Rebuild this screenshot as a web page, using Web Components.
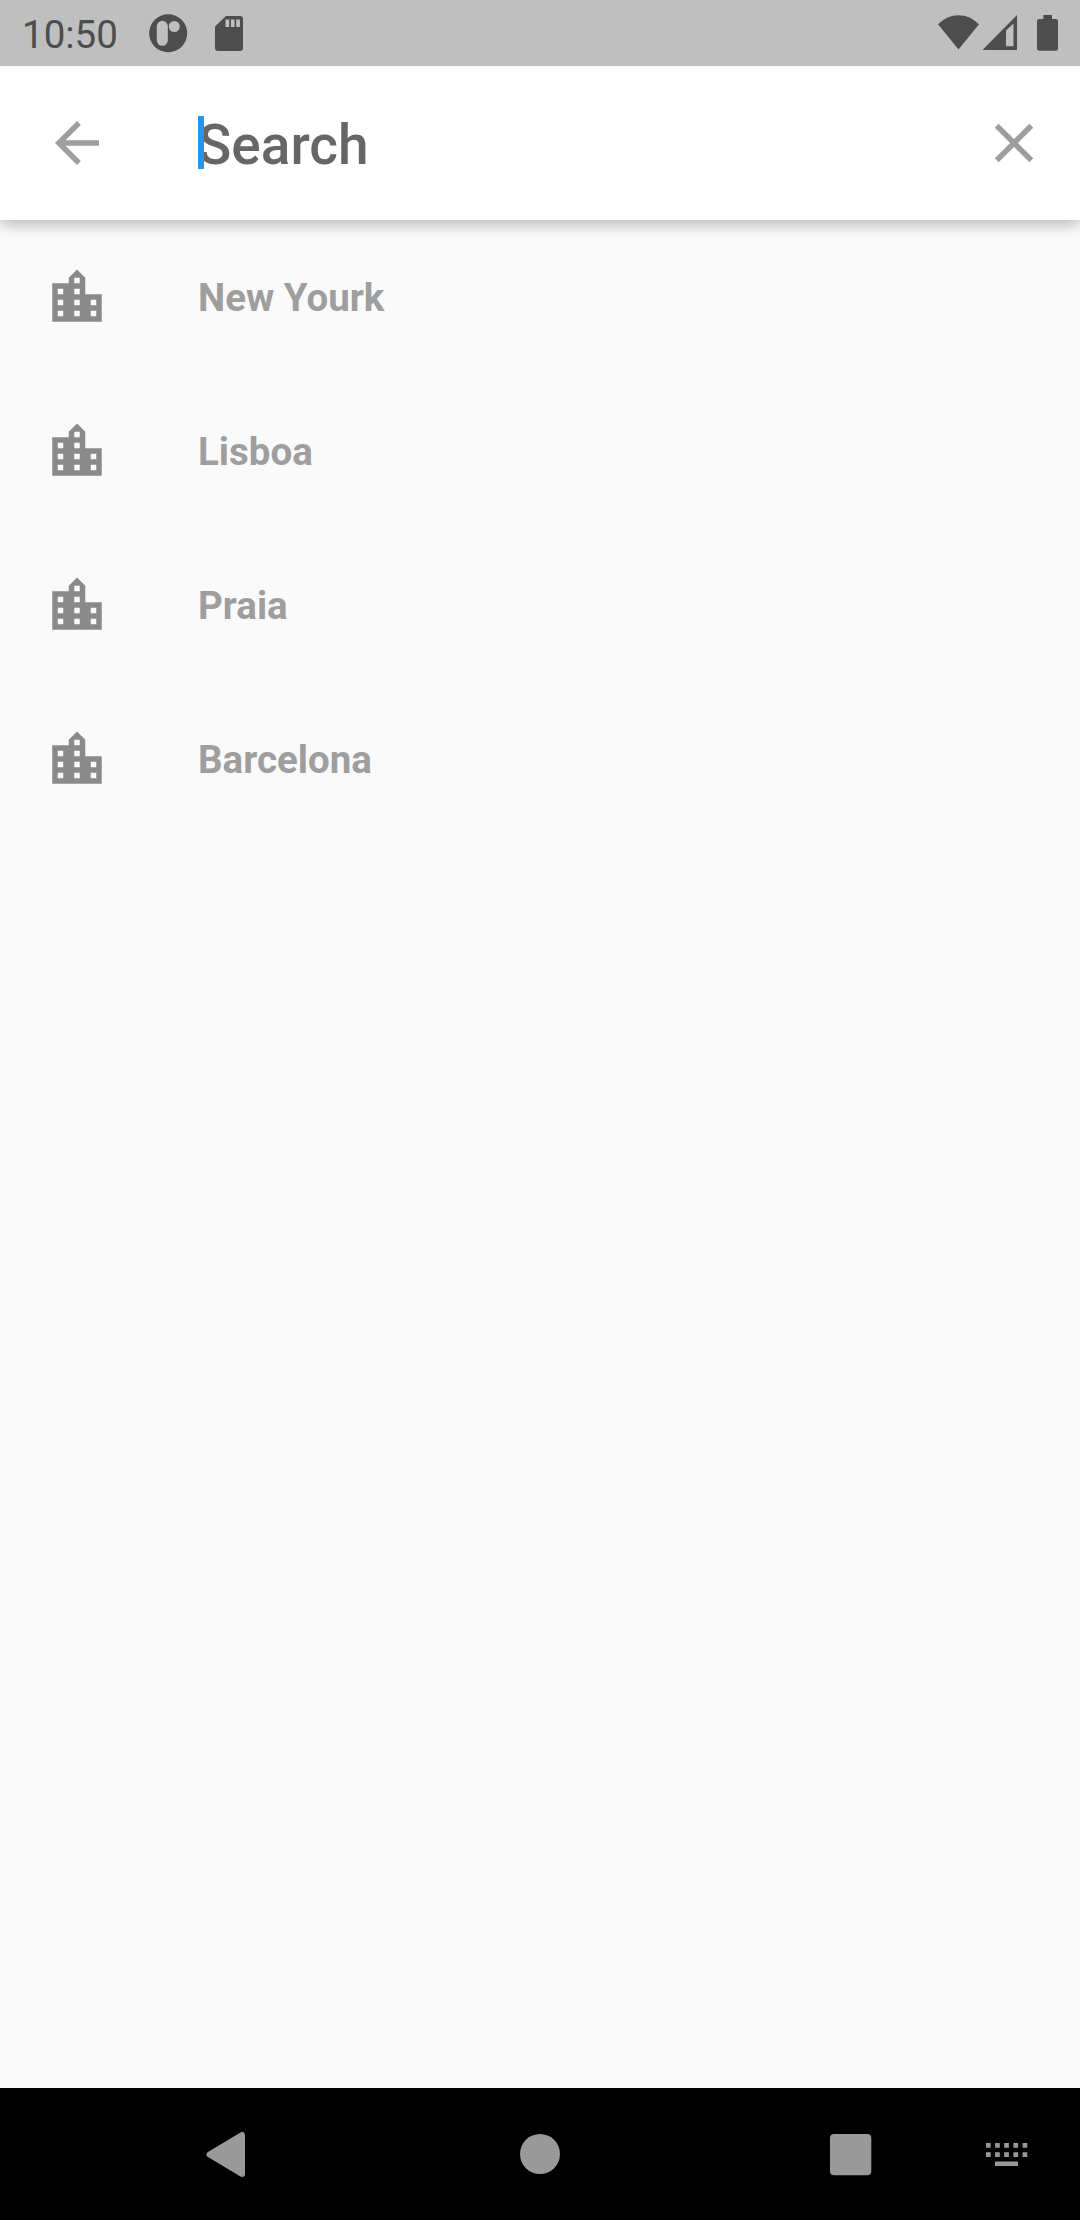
<!DOCTYPE html>
<html lang="en">
<head>
<meta charset="utf-8">
<title>Search</title>
<style>
html, body { margin: 0; height: 100%; background: #fafafa; }
body { font-family: Roboto, sans-serif; overflow: hidden; }
</style>
</head>
<body>
<search-screen></search-screen>
<script>
const define = (name, html) => customElements.define(name, class extends HTMLElement {
  constructor() {
    super();
    const t = document.createElement('template');
    t.innerHTML = html;
    this.attachShadow({ mode: 'open' }).appendChild(t.content.cloneNode(true));
  }
});

define('status-bar', `
<style>
:host { display: flex; justify-content: space-between; height: 66px; background: #bfbfbf; color: #4d4d4d; flex: none; position: relative; z-index: 2; }
.left { display: flex; align-items: flex-start; padding-left: 22px; }
.time { font-size: 38.5px; line-height: 45px; width: 127px; padding-top: 12px; }
svg { display: block; fill: #4d4d4d; }
</style>
<div class="left">
  <div class="time">10:50</div>
  <svg width="100" height="66" viewBox="149 0 100 66">
    <circle cx="168.2" cy="33.2" r="19"/>
    <rect x="156.8" y="20.8" width="11" height="25" rx="5.5" fill="#bfbfbf"/>
    <circle cx="174.3" cy="26.5" r="5.5" fill="#bfbfbf"/>
    <path fill-rule="evenodd" d="M226 16h14q3 0 3 3v29q0 3-3 3h-22q-3 0-3-3V26.500zM225.500 19.500v7.500h3.700v-7.500zM231 19.500v7.500h3.500v-7.500zM236.200 19.500v7.500h3.700v-7.500z"/>
  </svg>
</div>
<svg width="160" height="66" viewBox="920 0 160 66">
  <path d="M958.500 49.500L938 24.300Q947 15.200 958.500 15.200T979 24.300z"/>
  <path fill-rule="evenodd" d="M982.500 50L1017 15v35zM1006 30.500V46.300h7.500V23.500z"/>
  <path d="M1043.300 15h8.700v4h3.700q2.300 0 2.300 2.300v27.200q0 2.300-2.300 2.300h-16.400q-2.300 0-2.300-2.300V21.300q0-2.300 2.300-2.300h4z"/>
</svg>`);

define('search-bar', `
<style>
:host { display: flex; align-items: center; height: 154px; background: #fff; flex: none; position: relative; z-index: 1;
  box-shadow: 0 5px 14px rgba(0,0,0,.18), 0 2px 16px rgba(0,0,0,.12); }
svg { display: block; fill: #9e9e9e; width: 66px; height: 66px; }
.back { padding: 0 44px; width: 66px; }
.field { flex: 1; padding-left: 44px; }
.box { position: relative; line-height: 64px; font-size: 55px; font-weight: 500; color: #666; padding-top: 4px; }
.caret { position: absolute; left: 0; top: 7.400px; width: 5.500px; height: 52.500px; background: #2196f3; }
.clear { padding: 0 33px; }
</style>
<div class="back"><svg viewBox="0 0 24 24"><path d="M20 11H7.830l5.590-5.590L12 4l-8 8 8 8 1.410-1.410L7.830 13H20v-2z"/></svg></div>
<div class="field"><div class="box">Search<span class="caret"></span></div></div>
<div class="clear"><svg viewBox="0 0 24 24"><path d="M19 6.410L17.590 5 12 10.590 6.410 5 5 6.410 10.590 12 5 17.590 6.410 19 12 13.410 17.590 19 19 17.590 13.410 12z"/></svg></div>`);

define('city-row', `
<style>
:host { display: flex; align-items: center; gap: 88px; height: 154px; padding-left: 44px; font-size: 38.500px; font-weight: 700; color: #9e9e9e; }
svg { display: block; width: 66px; height: 66px; fill: #8a8a8a; }
.name { line-height: 45px; padding-top: 1px; }
</style>
<svg viewBox="0 0 24 24"><path d="M15 11V5l-3-3-3 3v2H3v14h18V11h-6zm-8 8H5v-2h2v2zm0-4H5v-2h2v2zm0-4H5V9h2v2zm6 8h-2v-2h2v2zm0-4h-2v-2h2v2zm0-4h-2V9h2v2zm0-4h-2V5h2v2zm6 12h-2v-2h2v2zm0-4h-2v-2h2v2z"/></svg>
<div class="name"><slot></slot></div>`);

define('nav-bar', `
<style>
:host { display: block; height: 132px; background: #000; flex: none; }
svg { display: block; fill: #999; }
</style>
<svg width="1080" height="132" viewBox="0 2088 1080 132">
  <path d="M209.500 2154.500L242 2135V2174z" stroke="#999" stroke-width="6" stroke-linejoin="round"/>
  <circle cx="540" cy="2154" r="20"/>
  <rect x="830" y="2134" width="41.300" height="41.300" rx="4"/>
  <path d="M986 2143h4.700v4.700h-4.700zM995.100 2143h4.700v4.700h-4.700zM1004.200 2143h4.700v4.700h-4.700zM1013.400 2143h4.700v4.700h-4.700zM1022.600 2143h4.700v4.700h-4.700zM986 2152.200h4.700v4.700h-4.700zM995.100 2152.200h4.700v4.700h-4.700zM1004.200 2152.200h4.700v4.700h-4.700zM1013.400 2152.200h4.700v4.700h-4.700zM1022.600 2152.200h4.700v4.700h-4.700zM995 2161.400h23v4.600h-23z"/>
</svg>`);

define('search-screen', `
<style>
:host { display: flex; flex-direction: column; width: 1080px; height: 2220px; background: #fafafa; }
main { flex: 1; }
</style>
<status-bar></status-bar>
<search-bar></search-bar>
<main>
  <city-row>New Yourk</city-row>
  <city-row>Lisboa</city-row>
  <city-row>Praia</city-row>
  <city-row>Barcelona</city-row>
</main>
<nav-bar></nav-bar>`);
</script>
</body>
</html>
